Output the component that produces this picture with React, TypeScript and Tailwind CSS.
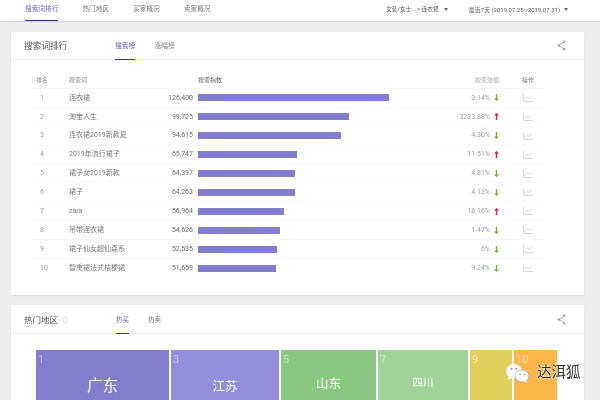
const FONT = "font-['Roboto','Noto_Sans_CJK_SC',sans-serif]";

const rows = [
  { k: "连衣裙", v: "126,400", w: 191, p: "3.14%", up: false },
  { k: "淘宝人生", v: "99,725", w: 151, p: "3223.88%", up: true },
  { k: "连衣裙2019新款夏", v: "94,615", w: 143, p: "4.30%", up: false },
  { k: "2019年流行裙子", v: "65,747", w: 99, p: "11.51%", up: true },
  { k: "裙子女2019新款", v: "64,397", w: 97, p: "4.81%", up: false },
  { k: "裙子", v: "64,263", w: 97, p: "4.13%", up: false },
  { k: "zara", v: "56,964", w: 86, p: "18.16%", up: true },
  { k: "吊带连衣裙", v: "54,626", w: 82, p: "1.47%", up: false },
  { k: "裙子仙女超仙森系", v: "52,535", w: 79, p: "6%", up: false },
  { k: "智熏裙法式桔梗裙", v: "51,659", w: 78, p: "9.24%", up: false },
];

const tiles = [
  { n: "1", t: "广东", w: "w-[133px]", bg: "bg-[#837dd0]", size: "text-[15.5px] pt-[10px]" },
  { n: "3", t: "江苏", w: "w-[108px]", bg: "bg-[#928edb]", size: "text-[12.5px] pt-[12px]" },
  { n: "5", t: "山东", w: "w-[95px]", bg: "bg-[#88c880]", size: "text-[12.5px] pt-[9px]" },
  { n: "7", t: "四川", w: "w-[90px]", bg: "bg-[#a0d29a]", size: "text-[10.5px] pt-[9px]" },
  { n: "9", t: "", w: "w-[42px]", bg: "bg-[#e2d05c]", size: "" },
  { n: "10", t: "", w: "w-[43px]", bg: "bg-[#fbb748]", size: "" },
];

function Share() {
  return (
    <svg width="9" height="11" viewBox="0 0 9 11" fill="none" stroke="#a3a3a3" strokeWidth="0.9">
      <path d="M7 2 2 5.5 7 9" />
      <circle cx="7.2" cy="1.8" r="1.2" fill="#a3a3a3" stroke="none" />
      <circle cx="1.8" cy="5.5" r="1.2" fill="#a3a3a3" stroke="none" />
      <circle cx="7.2" cy="9.2" r="1.2" fill="#a3a3a3" stroke="none" />
    </svg>
  );
}

function Trend() {
  return (
    <svg width="10" height="8" viewBox="0 0 10 8" fill="none" stroke="#c9c9c9" strokeWidth="0.7">
      <path d="M.5 0v7.5H10" />
      <path d="M1.5 5.5 3.5 3l2 1.5L9 2" />
    </svg>
  );
}

function Arrow({ up }: { up: boolean }) {
  return (
    <svg width="5" height="7" viewBox="0 0 5 7" fill={up ? "#d8203a" : "#6fb52c"}>
      <path d={up ? "M2.5 0 5 2.6H3.2V7H1.8V2.6H0z" : "M2.5 7 5 4.4H3.2V0H1.8V4.4H0z"} />
    </svg>
  );
}

function Caret() {
  return <span className="block w-0 h-0 border-x-[2px] border-x-transparent border-t-[3px] border-t-[#666]" />;
}

function Card({ className, children }: { className: string; children: React.ReactNode }) {
  return <section className={`mx-[11px] w-[573px] bg-white shadow-[0_1px_1px_rgba(0,0,0,0.08)] ${className}`}>{children}</section>;
}

export default function App() {
  return (
    <div className={`${FONT} relative w-[600px] h-[400px] overflow-hidden bg-[#ededed] text-[#777] blur-[0.25px]`}>
      <header className="h-[21px] bg-white shadow-[0_1px_1px_rgba(0,0,0,0.1)] flex items-start pl-[25px] pr-[32px] text-[6.7px]">
        <nav className="flex gap-[24px] leading-[19px]">
          <span className="h-[21px] border-b border-[#3b2f8f] text-[#6a62b8]">搜索词排行</span>
          <span>热门地区</span>
          <span>买家概况</span>
          <span>卖家概况</span>
        </nav>
        <div className="ml-auto flex items-center h-[19px] text-[#555] whitespace-nowrap">
          <span className="text-[5.7px]">女装/女士... &gt; 连衣裙</span>
          <span className="ml-[5px]"><Caret /></span>
          <span className="ml-[21px] text-[6px]">最近7天 (2019.07.25~2019.07.31)</span>
          <span className="ml-[4px]"><Caret /></span>
        </div>
      </header>

      <Card className="mt-[11px] h-[263px]">
        <div className="h-[28px] border-b border-[#f0f0f0] flex items-start pl-[13px] pr-[18px]">
          <h2 className="text-[8.7px] leading-[28px] text-[#555] font-normal w-[91px]">搜索词排行</h2>
          <div className="flex gap-[19px] text-[6.8px] leading-[28px]">
            <span className="h-[28px] border-b border-[#3b2f8f] text-[#6a62b8]">搜索榜</span>
            <span className="text-[#888]">涨幅榜</span>
          </div>
          <span className="ml-auto mt-[8px]"><Share /></span>
        </div>
        <div className="ml-[22px] w-[511px] mt-[11px]">
          <div className="flex items-center h-[18px] text-[6px] text-[#888] border-b border-[#f5f5f5]">
            <span className="w-[36px] shrink-0 pl-[3px]">排名</span>
            <span className="w-[129px] shrink-0">搜索词</span>
            <span className="w-[274px] shrink-0 text-[#666]">搜索指数</span>
            <span className="w-[27px] shrink-0 text-right text-[#aaa]">搜索涨幅</span>
            <span className="ml-[23px] text-[#777]">操作</span>
          </div>
          {rows.map((r, i) => (
            <div key={r.k} className="flex items-center h-[18.9px] text-[7px] border-b border-[#f7f7f7] last:border-b-0">
              <span className="w-[36px] shrink-0 pl-[7px] text-[#999]">{i + 1}</span>
              <span className="w-[90px] shrink-0">{r.k}</span>
              <span className="w-[34px] shrink-0 text-right text-[#666]">{r.v}</span>
              <span className="ml-[5px] w-[254px] shrink-0 h-[7px] flex">
                <span className="h-full bg-[#837dd0]" style={{ width: r.w }} />
              </span>
              <span className="w-[38px] shrink-0 text-[#999] whitespace-nowrap flex justify-end">{r.p}</span>
              <span className="ml-[4px] w-[5px] shrink-0 flex"><Arrow up={r.up} /></span>
              <span className="ml-[24px] shrink-0 flex"><Trend /></span>
            </div>
          ))}
        </div>
      </Card>

      <Card className="mt-[10px] h-[120px]">
        <div className="h-[29px] border-b border-[#f0f0f0] flex items-start pl-[13px] pr-[18px]">
          <h2 className="text-[8.5px] leading-[30px] text-[#555] font-normal flex items-center w-[92px]">
            热门地区
            <span className="ml-[4px] w-[6px] h-[6px] rounded-full border border-[#ddd]" />
          </h2>
          <div className="flex gap-[19px] text-[6.5px] leading-[30px]">
            <span className="h-[29px] border-b border-[#3b2f8f] text-[#6a62b8]">热买</span>
            <span className="text-[#777]">热卖</span>
          </div>
          <span className="ml-auto mt-[9px]"><Share /></span>
        </div>
        <div className="ml-[25px] mt-[16px] flex gap-[2px] h-[60px]">
          {tiles.map((t) => (
            <div key={t.n} className={`${t.w} ${t.bg} shrink-0 text-white`}>
              <div className="pl-[2px] text-[11px] leading-[19px] text-white/50">{t.n}</div>
              <div className={`text-center leading-none ${t.size}`}>{t.t}</div>
            </div>
          ))}
        </div>
      </Card>

      <div className="absolute left-[505px] top-[362px] flex items-center">
        <svg width="26" height="22" viewBox="0 0 26 22">
          <ellipse cx="9" cy="9" rx="8" ry="7" fill="#fff" stroke="#ddd" strokeWidth="0.5" />
          <path d="M4 14 3 18l5-3z" fill="#fff" />
          <ellipse cx="17" cy="14" rx="7" ry="6" fill="#fff" stroke="#999" strokeWidth="0.6" />
          <path d="M21 18l1.5 3-4-2z" fill="#fff" />
          <circle cx="6.5" cy="7" r="1" fill="#999" />
          <circle cx="11.5" cy="7" r="1" fill="#999" />
          <circle cx="15" cy="12.5" r="0.8" fill="#999" />
          <circle cx="19.5" cy="12.5" r="0.8" fill="#999" />
        </svg>
        <span className="ml-[6px] text-[14.5px] leading-none text-[#333] [text-shadow:0_0_2px_#fff,0_0_2px_#fff]">达洱狐</span>
      </div>
    </div>
  );
}
